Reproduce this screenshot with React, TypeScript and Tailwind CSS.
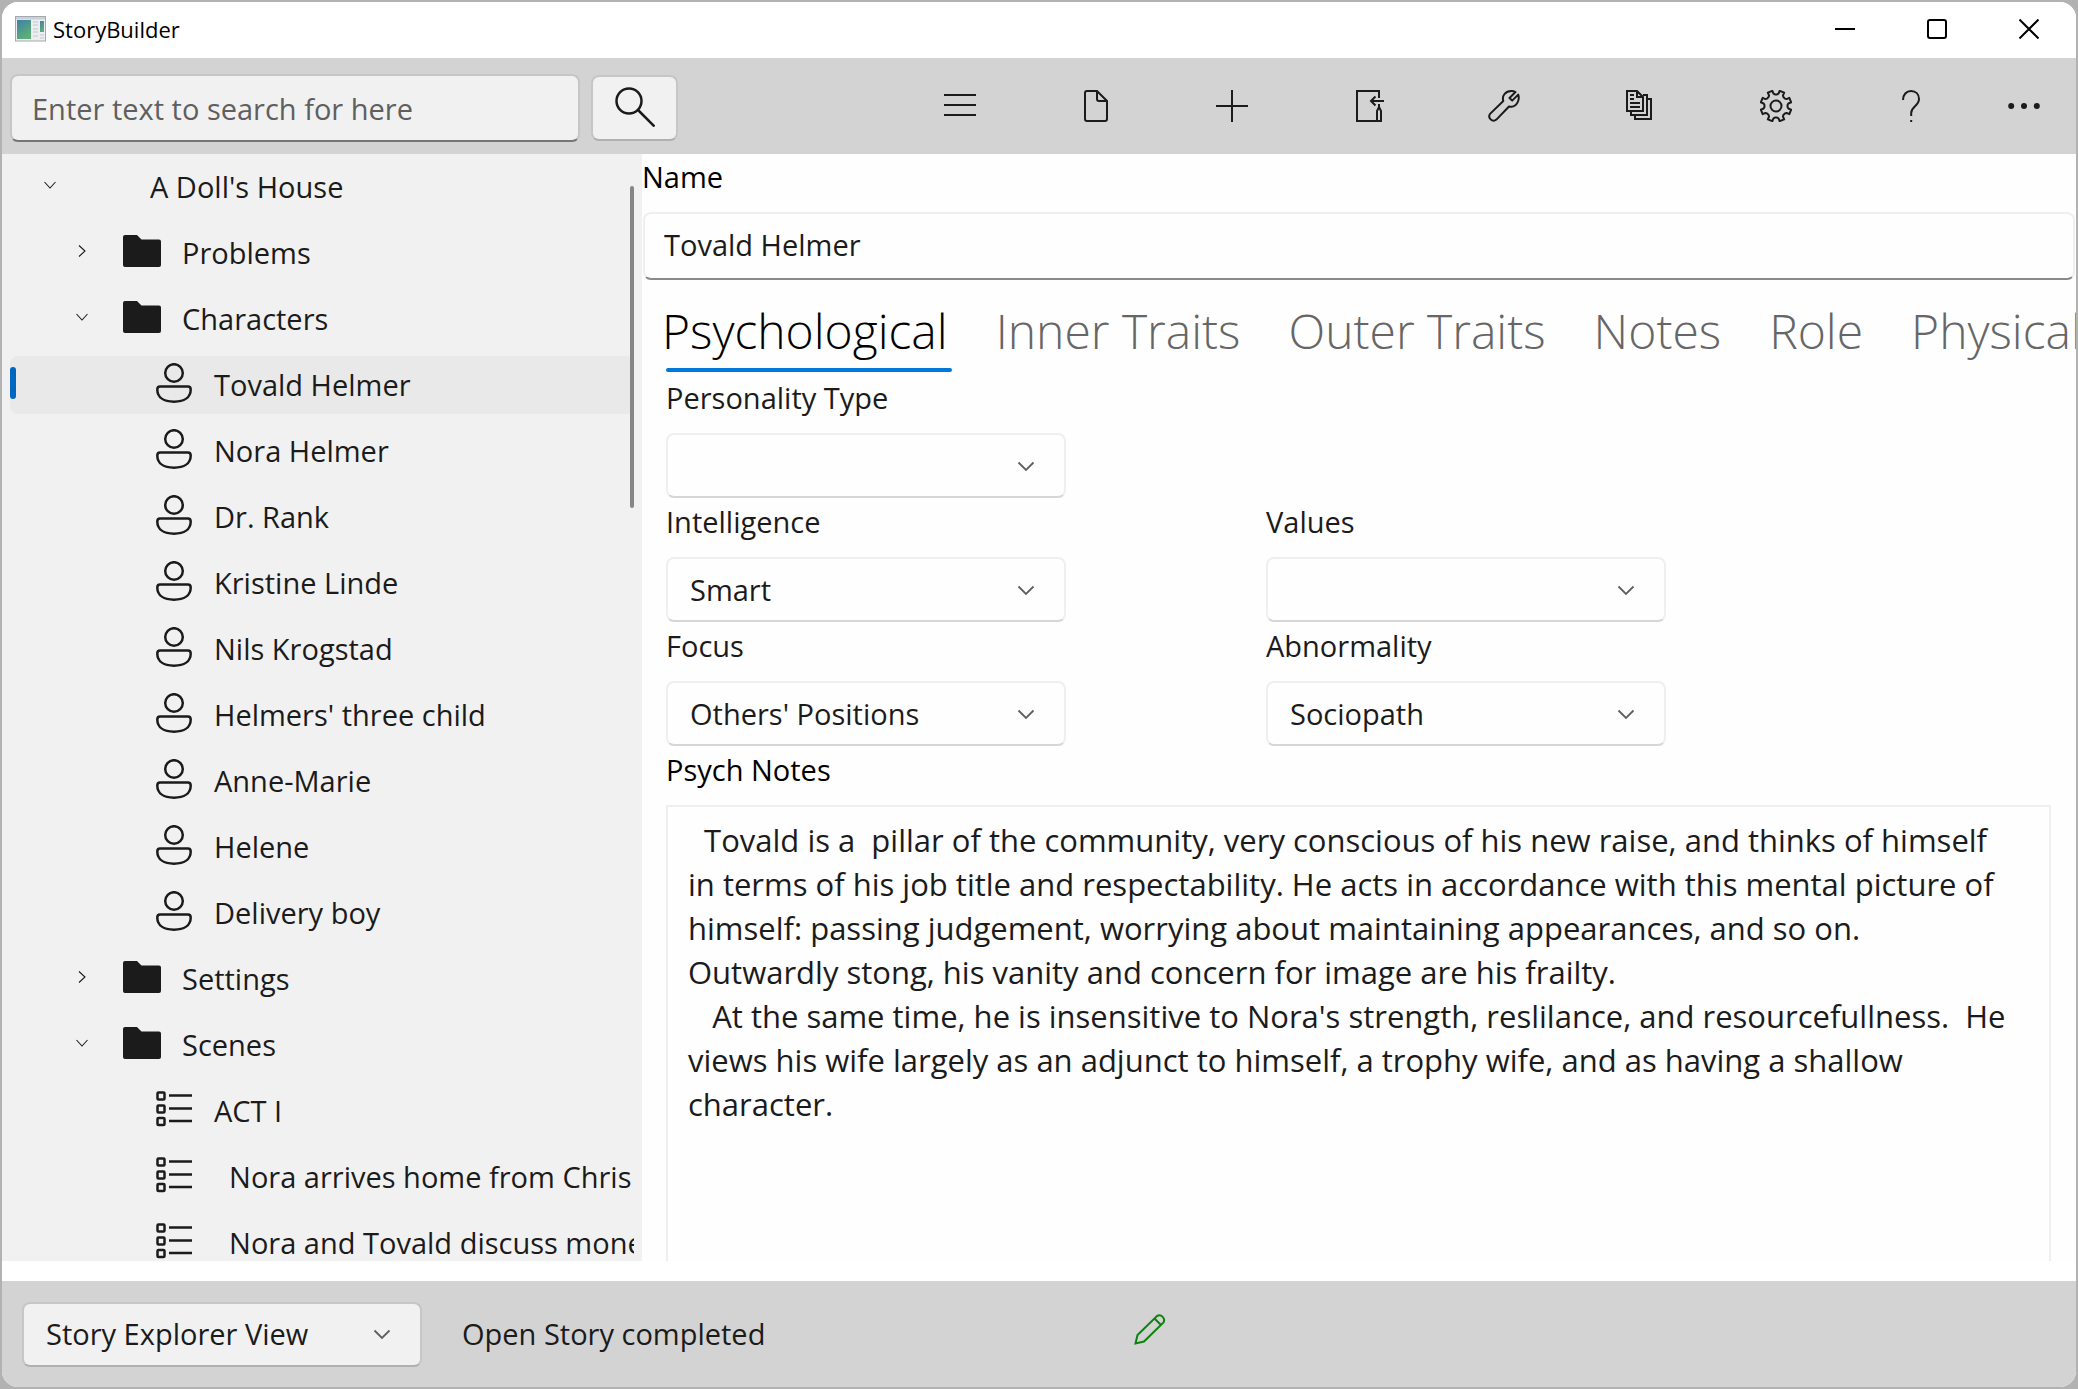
import { useId, type ReactNode } from "react";

type IconProps = { size?: string; children: ReactNode; box?: string; width?: number };

function Icon({ size = "size-8", box = "0 0 32 32", width = 2, children }: IconProps) {
  return (
    <svg className={`${size} shrink-0`} viewBox={box} fill="none" stroke="currentColor" strokeWidth={width} aria-hidden="true">
      {children}
    </svg>
  );
}

function gearPath() {
  const points: string[] = [];
  for (let tooth = 0; tooth < 8; tooth++) {
    const centre = 22.5 + tooth * 45;
    const corners: [number, number][] = [
      [-17, 11.6],
      [-11, 12.6],
      [-9, 15.6],
      [9, 15.6],
      [11, 12.6],
      [17, 11.6],
    ];
    for (const [offset, radius] of corners) {
      const angle = ((centre + offset) * Math.PI) / 180;
      points.push(`${(16 + radius * Math.sin(angle)).toFixed(2)} ${(16 - radius * Math.cos(angle)).toFixed(2)}`);
    }
  }
  return `M${points.join("L")}Z`;
}

const commands: { label: string; icon: ReactNode }[] = [
  { label: "Menu", icon: <Icon><path d="M0 5H32M0 15H32M0 25H32" /></Icon> },
  {
    label: "File",
    icon: <Icon><path d="M7 1H17L27 11V29a2 2 0 0 1-2 2H7a2 2 0 0 1-2-2V3a2 2 0 0 1 2-2ZM17 1V9a2 2 0 0 0 2 2H27" /></Icon>,
  },
  { label: "Add", icon: <Icon><path d="M16 0V32M0 16H32" /></Icon> },
  {
    label: "Move",
    icon: (
      <Icon>
        <path d="M27 8V1H5V31H29V21L27 17L25 21V31M27 14V18M32 11H19M23.5 6.5L19 11L23.5 15.5" />
      </Icon>
    ),
  },
  {
    label: "Tools",
    icon: (
      <Icon>
        <path strokeLinejoin="round" d="M15.3 11C13.5 5.5 18 .9 23.5 1C25 1 26.5 1.4 27.5 2L21.5 8L24.2 10.6L30.2 4.6C32 9.5 29 16.3 23.5 16.8C22.5 16.9 21.8 16.8 21 16.5L8.4 29.6A4.3 4.3 0 0 1 2.3 23.6Z" />
      </Icon>
    ),
  },
  {
    label: "Reports",
    icon: (
      <Icon>
        <path d="M3 1H13L19 7V21H3ZM13 1V7H19M19 5H23V25H7V21M23 9H27V29H11V25M6 5H10M6 9H10M6 13H16M6 17H16" />
      </Icon>
    ),
  },
  { label: "Preferences", icon: <Icon><path strokeLinejoin="round" d={gearPath()} /><circle cx="16" cy="16" r="5.5" /></Icon> },
  {
    label: "Help",
    icon: (
      <Icon>
        <path d="M7 10C7 4.6 10.4 1 15 1C19.8 1 23 4.3 23 9C23 16 15.2 16.5 15.2 23V26M15.2 30V32" />
      </Icon>
    ),
  },
];

type Kind = "root" | "folder" | "person" | "scene";
type Node = { text: string; kind: Kind; open?: boolean; selected?: boolean };

const nodes: Node[] = [
  { text: "A Doll's House", kind: "root", open: true },
  { text: "Problems", kind: "folder", open: false },
  { text: "Characters", kind: "folder", open: true },
  { text: "Tovald Helmer", kind: "person", selected: true },
  { text: "Nora Helmer", kind: "person" },
  { text: "Dr. Rank", kind: "person" },
  { text: "Kristine Linde", kind: "person" },
  { text: "Nils Krogstad", kind: "person" },
  { text: "Helmers' three child", kind: "person" },
  { text: "Anne-Marie", kind: "person" },
  { text: "Helene", kind: "person" },
  { text: "Delivery boy", kind: "person" },
  { text: "Settings", kind: "folder", open: false },
  { text: "Scenes", kind: "folder", open: true },
  { text: "ACT I", kind: "scene" },
  { text: "  Nora arrives home from Chris", kind: "scene" },
  { text: "  Nora and Tovald discuss mone", kind: "scene" },
];

const indent: Record<Kind, string> = { root: "pl-7", folder: "pl-[60px]", person: "pl-[146px]", scene: "pl-[146px]" };

function NodeIcon({ kind }: { kind: Kind }) {
  if (kind === "folder")
    return (
      <svg className="ml-[29px] mr-[21px] h-8 w-[38px] shrink-0" viewBox="0 0 38 32" fill="currentColor" aria-hidden="true">
        <path d="M2 0H14L18.5 4.5H36A2 2 0 0 1 38 6.5V30A2 2 0 0 1 36 32H2A2 2 0 0 1 0 30V2A2 2 0 0 1 2 0Z" />
      </svg>
    );
  if (kind === "person")
    return (
      <span className="mr-[22px] flex">
        <Icon size="h-10 w-9" box="0 0 36 40" width={2.5}>
          <circle cx="18" cy="10" r="8.8" />
          <path d="M4 23.5H32Q34.7 23.5 34.7 26.5C34.7 34.5 28 38.7 18 38.7S1.3 34.5 1.3 26.5Q1.3 23.5 4 23.5Z" />
        </Icon>
      </span>
    );
  if (kind === "scene")
    return (
      <span className="mr-[22px] flex">
        <Icon size="h-9 w-9" box="0 0 36 36" width={2.5}>
          <rect x="1.5" y="1.5" width="7" height="7" rx="1" />
          <rect x="1.5" y="14.5" width="7" height="7" rx="1" />
          <rect x="1.5" y="27" width="7" height="7" rx="1" />
          <path d="M13 4.5H36M13 17.5H36M13 30H36" />
        </Icon>
      </span>
    );
  return <span className="w-[88px] shrink-0" />;
}

function TreeRow({ node }: { node: Node }) {
  const branch = node.open !== undefined;
  return (
    <li className="py-1 pl-2" role="treeitem" aria-selected={!!node.selected} aria-expanded={node.open}>
      <button
        type="button"
        className={`relative flex h-[58px] w-full items-center overflow-hidden rounded-lg pb-1 text-left ${indent[node.kind]} ${node.selected ? "bg-[#e9e9e9]" : ""}`}
      >
        {node.selected && <span className="absolute left-0 top-[11px] h-8 w-1.5 rounded-full bg-[#0067c0]" />}
        {branch && (
          <Icon size="size-6" box="0 0 24 24" width={1.1}>
            <path d={node.open ? "M6.5 9L12 15L17.5 9" : "M9 6.5L15 12L9 17.5"} />
          </Icon>
        )}
        <NodeIcon kind={node.kind} />
        <span className="pt-1 text-[29px] leading-10 whitespace-pre">{node.text}</span>
      </button>
    </li>
  );
}

function Combo({ value, label, grey = false }: { value: string; label?: string; grey?: boolean }) {
  const id = useId();
  return (
    <div className="w-[400px]">
      {label && (
        <label htmlFor={id} className="block h-[59px] pt-1 text-[29px] leading-10">
          {label}
        </label>
      )}
      <div className="relative">
        <select
          id={id}
          aria-label={label ? undefined : "View"}
          defaultValue={value}
          className={`h-[65px] w-full appearance-none rounded-lg border-2 pl-[22px] pr-16 text-[29px] outline-none ${
            grey ? "border-[#c6c6c6] border-b-[#b0b0b0] bg-[#f1f1f1]" : "border-[#efefef] border-b-[#d6d6d6] bg-[#fefefe]"
          }`}
        >
          <option>{value}</option>
        </select>
        <span className="pointer-events-none absolute inset-y-0 right-7 flex items-center text-[#5f5f5f]">
          <Icon size="size-6" box="0 0 24 24" width={1.8}>
            <path d="M4.5 8.5L12 16L19.5 8.5" />
          </Icon>
        </span>
      </div>
    </div>
  );
}

const tabs = ["Psychological", "Inner Traits", "Outer Traits", "Notes", "Role", "Physical"];

const notes =
  "  Tovald is a  pillar of the community, very conscious of his new raise, and thinks of himself in terms of his job title and respectability. He acts in accordance with this mental picture of himself: passing judgement, worrying about maintaining appearances, and so on. Outwardly stong, his vanity and concern for image are his frailty.\n" +
  "   At the same time, he is insensitive to Nora's strength, reslilance, and resourcefullness.  He views his wife largely as an adjunct to himself, a trophy wife, and as having a shallow character.";

function TitleBar() {
  return (
    <header className="flex h-14 shrink-0 items-center justify-between bg-white">
      <div className="flex items-center gap-1.5 pb-0.5 pl-[13px]">
        <svg className="h-[26px] w-8" viewBox="0 0 32 26" aria-hidden="true">
          <defs>
            <linearGradient id="pane" x1="0" y1="0" x2="0.5" y2="1">
              <stop offset="0" stopColor="#3f7fa6" />
              <stop offset="1" stopColor="#5db075" />
            </linearGradient>
          </defs>
          <rect x="0.5" y="0.5" width="30" height="24.5" fill="#eceef0" stroke="#a3a9b0" />
          <rect x="1" y="1" width="29" height="2.5" fill="#c9d0da" />
          <rect x="2" y="4" width="14" height="19" fill="url(#pane)" />
          <path d="M18 6H23M18 9H23M18 13H23M18 16H23M18 20H23" stroke="#c3c7cb" />
          <rect x="25" y="5" width="4" height="11" fill="url(#pane)" />
          <path d="M25 19H29M25 22H29" stroke="#c3c7cb" />
        </svg>
        <h1 className="text-[22px] leading-8 text-black">StoryBuilder</h1>
      </div>
      <div className="flex h-full pr-px pb-0.5 text-black">
        <button type="button" aria-label="Minimize" className="flex w-[92px] items-center justify-center">
          <Icon size="size-5" box="0 0 20 20"><path d="M0 10H20" /></Icon>
        </button>
        <button type="button" aria-label="Maximize" className="flex w-[92px] items-center justify-center">
          <Icon size="size-5" box="0 0 20 20"><rect x="1" y="1" width="18" height="18" rx="2" /></Icon>
        </button>
        <button type="button" aria-label="Close" className="flex w-[92px] items-center justify-center">
          <Icon size="size-5" box="0 0 20 20"><path d="M0.5 0.5L19.5 19.5M19.5 0.5L0.5 19.5" /></Icon>
        </button>
      </div>
    </header>
  );
}

function Toolbar() {
  return (
    <div className="flex h-24 shrink-0 items-center justify-between bg-[#d3d3d3] pl-2">
      <form className="flex items-center gap-[11px] pt-1" onSubmit={(event) => event.preventDefault()}>
        <input
          type="search"
          aria-label="Search"
          placeholder="Enter text to search for here"
          className="h-[68px] w-[570px] rounded-lg border-2 border-[#c6c6c6] border-b-[#757575] bg-[#f1f1f1] px-5 text-[29px] outline-none placeholder:text-[#5f5f5f]"
        />
        <button
          type="submit"
          aria-label="Search"
          className="flex h-[66px] w-[87px] items-center justify-center rounded-lg border-2 border-[#c6c6c6] border-b-[#b0b0b0] bg-[#f1f1f1] pb-0.5"
        >
          <Icon size="size-10" box="0 0 40 40" width={2.5}>
            <circle cx="14" cy="14" r="12.5" />
            <path d="M23 23L39.5 39.5" />
          </Icon>
        </button>
      </form>
      <nav className="flex h-full pr-2">
        {commands.map((command) => (
          <button key={command.label} type="button" aria-label={command.label} className="flex w-[136px] items-center justify-center">
            {command.icon}
          </button>
        ))}
        <button type="button" aria-label="More" className="flex w-[88px] items-center justify-center">
          <svg className="size-8" viewBox="0 0 32 32" fill="currentColor" aria-hidden="true">
            <circle cx="3.2" cy="16" r="3" />
            <circle cx="16" cy="16" r="3" />
            <circle cx="28.8" cy="16" r="3" />
          </svg>
        </button>
      </nav>
    </div>
  );
}

function Detail() {
  return (
    <main className="flex min-w-0 flex-1 flex-col overflow-hidden bg-[#fefefe]">
      <label htmlFor="name" className="block h-[58px] shrink-0 pt-[3px] text-[29px] leading-10 text-black">
        Name
      </label>
      <div className="shrink-0 px-px">
        <input
          id="name"
          defaultValue="Tovald Helmer"
          className="h-[68px] w-full rounded-lg border-2 border-[#efefef] border-b-[#898989] bg-[#fefefe] px-[19px] pb-1 text-[29px] outline-none"
        />
      </div>
      <div role="tablist" className="flex h-[94px] shrink-0 items-end gap-12 pl-5 text-[48px] leading-[64px] font-[350] text-[#666]">
        {tabs.map((tab, index) => (
          <button
            key={tab}
            type="button"
            role="tab"
            aria-selected={index === 0}
            className={`flex shrink-0 flex-col whitespace-nowrap ${index === 0 ? "text-black" : ""}`}
          >
            {tab}
            <span className={`mt-[5px] mb-0.5 ml-1 h-1 w-full rounded-full ${index === 0 ? "bg-[#0078d7]" : ""}`} />
          </button>
        ))}
      </div>
      <div className="flex min-h-0 flex-1 flex-col overflow-hidden pr-[25px] pl-6">
        <Combo label="Personality Type" value="" />
        <div className="grid grid-cols-[600px_400px]">
          <Combo label="Intelligence" value="Smart" />
          <Combo label="Values" value="" />
          <Combo label="Focus" value="Others' Positions" />
          <Combo label="Abnormality" value="Sociopath" />
        </div>
        <label htmlFor="notes" className="block h-[59px] shrink-0 pt-1 text-[29px] leading-10 text-black">
          Psych Notes
        </label>
        <textarea
          id="notes"
          defaultValue={notes}
          className="min-h-0 w-full flex-1 resize-none overflow-hidden border-2 border-b-0 border-[#efefef] bg-[#fefefe] pt-[11px] pr-[38px] pl-5 text-[31px] leading-[44px] outline-none"
        />
      </div>
    </main>
  );
}

export default function App() {
  return (
    <div className="h-screen bg-[#b2b2b2] p-0.5 font-['Open_Sans','Noto_Sans',sans-serif] text-[#1b1b1b]">
      <div className="flex h-full flex-col overflow-hidden rounded-2xl bg-white">
        <TitleBar />
        <Toolbar />
        <div className="flex min-h-0 flex-1">
          <aside className="relative w-[640px] shrink-0 overflow-hidden bg-[#f1f1f1] pr-2">
            <ul role="tree" aria-label="Story explorer">
              {nodes.map((node) => (
                <TreeRow key={node.text} node={node} />
              ))}
            </ul>
            <span className="absolute top-8 right-2 h-[322px] w-1 rounded-full bg-[#868686]" />
          </aside>
          <Detail />
        </div>
        <footer className="mt-5 flex h-[106px] shrink-0 items-center bg-[#d3d3d3] pl-5">
          <Combo grey value="Story Explorer View" />
          <p className="w-[712px] pl-10 text-[29px] leading-10">Open Story completed</p>
          <span className="pb-2.5 text-[#0b840b]">
            <Icon>
              <path d="M1.5 30.5L3.5 22L23 3A4.8 4.8 0 0 1 29.5 9.5L10 28.5ZM20.5 5.5L27 12" />
            </Icon>
          </span>
        </footer>
      </div>
    </div>
  );
}
